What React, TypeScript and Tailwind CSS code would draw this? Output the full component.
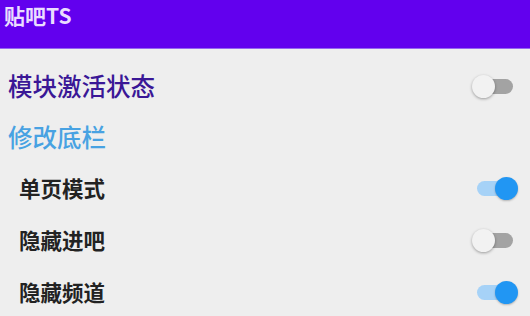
import { useState } from "react";

const cjk = { fontFamily: '"Noto Sans CJK SC", "Noto Sans", sans-serif' };

const items = [
  { name: "单页模式", on: true },
  { name: "隐藏进吧", on: false },
  { name: "隐藏频道", on: true },
];

function Switch({ on }: { on: boolean }) {
  return (
    <div className="relative w-[46px] h-[24px] flex items-center">
      <div
        className={
          "absolute left-[5px] w-[36px] h-[15px] rounded-full " +
          (on ? "bg-[#a6d2f7]" : "bg-[#a3a3a3]")
        }
      />
      <div
        className={
          "absolute top-[0.5px] w-[23px] h-[23px] rounded-full " +
          (on
            ? "left-[23px] bg-[#2196f3] shadow-[0_1px_2px_rgba(0,0,0,0.25)]"
            : "left-0 bg-[#f2f2f2] shadow-[0_1px_3px_rgba(0,0,0,0.35)]")
        }
      />
    </div>
  );
}

export default function App() {
  const [active] = useState(false);

  return (
    <div className="w-[530px] h-[316px] bg-[#eeeeee] overflow-hidden" style={cjk}>
      <div className="h-[49px] bg-[#6200ee] border-b border-[#9566f0] px-[4px] pt-[2px]">
        <h1 className="text-[21px] leading-[26px] font-bold text-[#eadcff]">贴吧TS</h1>
      </div>

      <div className="pt-[11px]">
        <div className="h-[52px] flex items-center justify-between pl-[8px] pr-[12px]">
          <span className="text-[24.5px] font-medium text-[#3a1796]">模块激活状态</span>
          <Switch on={active} />
        </div>

        <div className="h-[50px] flex items-center pl-[8px]">
          <span className="text-[24.5px] font-medium text-[#48a2e2]">修改底栏</span>
        </div>

        {items.map((item) => (
          <div key={item.name} className="h-[52px] flex items-center justify-between pl-[19px] pr-[12px]">
            <span className="text-[21.5px] font-bold text-[#222222]">{item.name}</span>
            <Switch on={item.on} />
          </div>
        ))}
      </div>
    </div>
  );
}
